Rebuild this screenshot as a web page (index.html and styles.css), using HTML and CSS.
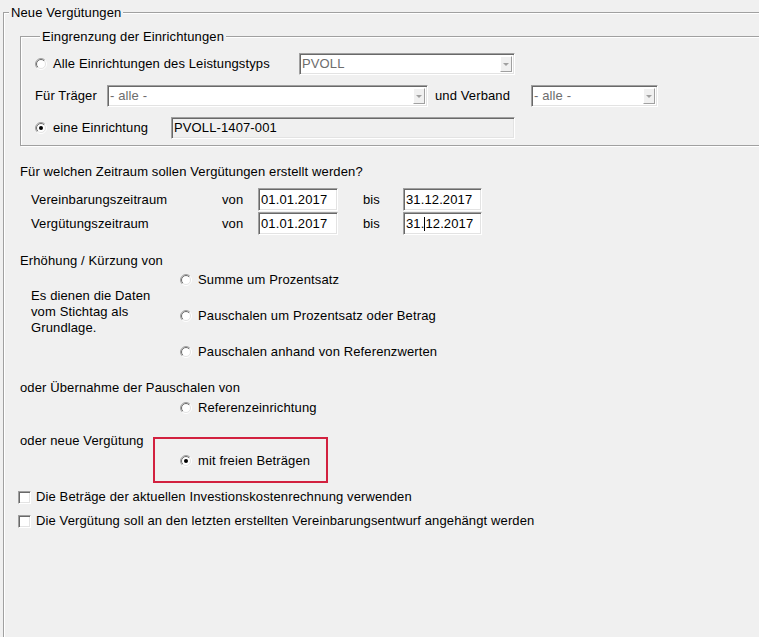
FILE: index.html
```html
<!DOCTYPE html>
<html lang="de">
<head>
<meta charset="utf-8">
<title>Neue Vergütungen</title>
<link rel="stylesheet" href="styles.css">
</head>
<body>
<svg class="defs" width="0" height="0" aria-hidden="true">
  <defs>
    <linearGradient id="rgo" x1="0" y1="0" x2="1" y2="1">
      <stop offset="0.48" stop-color="#a0a0a0"/>
      <stop offset="0.52" stop-color="#ffffff"/>
    </linearGradient>
    <linearGradient id="rgi" x1="0" y1="0" x2="1" y2="1">
      <stop offset="0.48" stop-color="#696969"/>
      <stop offset="0.52" stop-color="#e3e3e3"/>
    </linearGradient>
    <symbol id="radio" viewBox="0 0 12 12">
      <circle cx="6" cy="6" r="5.5" fill="none" stroke="url(#rgo)"/>
      <circle cx="6" cy="6" r="4.5" fill="#fff" stroke="url(#rgi)"/>
    </symbol>
  </defs>
</svg>

<fieldset class="group outer">
  <legend class="legend">Neue Vergütungen</legend>

  <fieldset class="group inner">
    <legend class="legend">Eingrenzung der Einrichtungen</legend>
    <div class="row">
      <label class="opt w-alle"><svg class="radio" width="12" height="12"><use href="#radio"/></svg>Alle Einrichtungen des Leistungstyps</label>
      <div class="combo w-pvoll"><span class="combo-text">PVOLL</span><span class="combo-btn"></span></div>
    </div>
    <div class="row">
      <span class="lbl w-traeger">Für Träger</span>
      <div class="combo w-traegercombo"><span class="combo-text">- alle -</span><span class="combo-btn"></span></div>
      <span class="lbl w-verband">und Verband</span>
      <div class="combo w-verbandcombo"><span class="combo-text">- alle -</span><span class="combo-btn"></span></div>
    </div>
    <div class="row">
      <label class="opt w-eine"><svg class="radio" width="12" height="12"><use href="#radio"/><circle cx="6" cy="6" r="2" fill="#000"/></svg>eine Einrichtung</label>
      <div class="field readonly w-einr">PVOLL-1407-001</div>
    </div>
  </fieldset>

  <div class="content">
    <p class="line head">Für welchen Zeitraum sollen Vergütungen erstellt werden?</p>
    <div class="daterow">
      <span class="dlabel">Vereinbarungszeitraum</span>
      <span class="von">von</span>
      <span class="field date">01.01.2017</span>
      <span class="bis">bis</span>
      <span class="field date2">31.12.2017</span>
    </div>
    <div class="daterow second">
      <span class="dlabel">Vergütungszeitraum</span>
      <span class="von">von</span>
      <span class="field date">01.01.2017</span>
      <span class="bis">bis</span>
      <span class="field date2">31.<span class="caret"></span>12.2017</span>
    </div>

    <p class="line sect">Erhöhung / Kürzung von</p>
    <div class="adjust">
      <p class="note">Es dienen die Daten<br>vom Stichtag als<br>Grundlage.</p>
      <div class="radios">
        <label class="opt"><svg class="radio" width="12" height="12"><use href="#radio"/></svg>Summe um Prozentsatz</label>
        <label class="opt"><svg class="radio" width="12" height="12"><use href="#radio"/></svg>Pauschalen um Prozentsatz oder Betrag</label>
        <label class="opt"><svg class="radio" width="12" height="12"><use href="#radio"/></svg>Pauschalen anhand von Referenzwerten</label>
      </div>
    </div>

    <p class="line sect2">oder Übernahme der Pauschalen von</p>
    <label class="opt ref"><svg class="radio" width="12" height="12"><use href="#radio"/></svg>Referenzeinrichtung</label>

    <div class="neue">
      <p class="line neue-lbl">oder neue Vergütung</p>
      <div class="highlight">
        <label class="opt"><svg class="radio" width="12" height="12"><use href="#radio"/><circle cx="6" cy="6" r="2" fill="#000"/></svg>mit freien Beträgen</label>
      </div>
    </div>

    <label class="check first"><span class="box"></span>Die Beträge der aktuellen Investionskostenrechnung verwenden</label>
    <label class="check"><span class="box"></span>Die Vergütung soll an den letzten erstellten Vereinbarungsentwurf angehängt werden</label>
  </div>
</fieldset>
</body>
</html>
```
FILE: styles.css
```css
html, body {
  margin: 0;
  padding: 0;
  overflow: hidden;
}
body {
  background: #f0f0f0;
  font-family: "Liberation Sans", Arial, sans-serif;
  font-size: 13px;
  letter-spacing: 0.12px;
  color: #000;
  width: 759px;
  height: 637px;
}
.defs { position: absolute; width: 0; height: 0; }
p { margin: 0; }

.group {
  border: 1px solid #a0a0a0;
  box-shadow: inset 1px 1px 0 #fff, 1px 1px 0 #fff;
  margin: 0;
  padding: 0;
  min-width: 0;
}
.legend {
  margin-left: 5px;
  padding: 0 2px;
  line-height: 15px;
  background: #f0f0f0;
}
.outer {
  margin: 5px 0 0 3px;
  width: 800px;
  height: 700px;
}
.inner {
  margin: 9px 0 0 16px;
  width: 800px;
  padding: 9px 0 6px 14px;
}

.row {
  display: flex;
  align-items: center;
  height: 22px;
}
.row + .row { margin-top: 10px; }

.opt {
  display: flex;
  align-items: center;
  gap: 6px;
  height: 16px;
  line-height: 16px;
  white-space: nowrap;
}
.radio { flex: none; display: block; }

.w-alle { width: 264px; }
.w-eine { width: 136px; }
.lbl { white-space: nowrap; line-height: 16px; }
.w-traeger { width: 72px; }
.w-verband { width: 96px; margin-left: 7px; }

.combo {
  display: flex;
  align-items: stretch;
  box-sizing: border-box;
  height: 22px;
  background: #fff;
  border: 1px solid;
  border-color: #a0a0a0 #fff #fff #a0a0a0;
  box-shadow: inset 1px 1px 0 #696969, inset -1px -1px 0 #e3e3e3;
  padding: 2px 2px 2px 2px;
}
.w-pvoll { width: 216px; }
.w-traegercombo { width: 321px; }
.w-verbandcombo { width: 127px; }
.combo-text {
  flex: 1;
  color: #6d6d6d;
  line-height: 16px;
  white-space: nowrap;
}
.combo-btn {
  width: 12px;
  box-sizing: border-box;
  background: #f0f0f0;
  border: 1px solid;
  border-color: #fff #a0a0a0 #a0a0a0 #fff;
  display: flex;
  align-items: center;
  justify-content: center;
}
.combo-btn::after {
  content: "";
  width: 0;
  height: 0;
  border-top: 3px solid #a0a0a0;
  border-left: 3px solid transparent;
  border-right: 3px solid transparent;
}

.field {
  display: block;
  box-sizing: border-box;
  background: #fff;
  border: 1px solid;
  border-color: #a0a0a0 #fff #fff #a0a0a0;
  box-shadow: inset 1px 1px 0 #696969, inset -1px -1px 0 #e3e3e3;
  padding: 0 2px;
  white-space: nowrap;
}
.readonly {
  background: #f0f0f0;
  height: 22px;
  line-height: 20px;
}
.w-einr { width: 344px; }

.content {
  padding-left: 16px;
}
.line { line-height: 16px; white-space: nowrap; }
.head { margin-top: 18px; }

.daterow {
  display: flex;
  align-items: center;
  height: 23px;
  margin-top: 8px;
  padding-left: 11px;
}
.daterow.second { margin-top: 1px; }
.dlabel { width: 191px; }
.von { width: 36px; }
.bis { width: 40px; margin-left: 25px; }
.date, .date2 {
  height: 23px;
  line-height: 21px;
}
.date { width: 80px; }
.date2 { width: 79px; }
.caret {
  display: inline-block;
  width: 1px;
  height: 14px;
  background: #000;
  vertical-align: -3px;
}

.sect { margin-top: 18px; }
.adjust {
  display: flex;
  margin-top: 3px;
}
.note {
  width: 149px;
  padding-left: 11px;
  padding-top: 16px;
  line-height: 16px;
}
.radios {
  display: flex;
  flex-direction: column;
  gap: 20px;
}
.sect2 { margin-top: 20px; }
.ref { margin-top: 4px; margin-left: 160px; }

.neue {
  display: flex;
  margin-top: 17px;
}
.neue-lbl { width: 133px; }
.highlight {
  box-sizing: border-box;
  width: 175px;
  height: 46px;
  margin-top: 4px;
  border: 2px solid #d2213f;
  padding: 14px 0 0 25px;
}

.check {
  display: flex;
  align-items: center;
  gap: 5px;
  height: 16px;
  line-height: 16px;
  margin-left: -2px;
  margin-top: 8px;
  white-space: nowrap;
}
.check.first { margin-top: 6px; }
.box {
  flex: none;
  box-sizing: border-box;
  width: 13px;
  height: 13px;
  background: #fff;
  border: 1px solid;
  border-color: #a0a0a0 #fff #fff #a0a0a0;
  box-shadow: inset 1px 1px 0 #696969, inset -1px -1px 0 #e3e3e3;
}
```
